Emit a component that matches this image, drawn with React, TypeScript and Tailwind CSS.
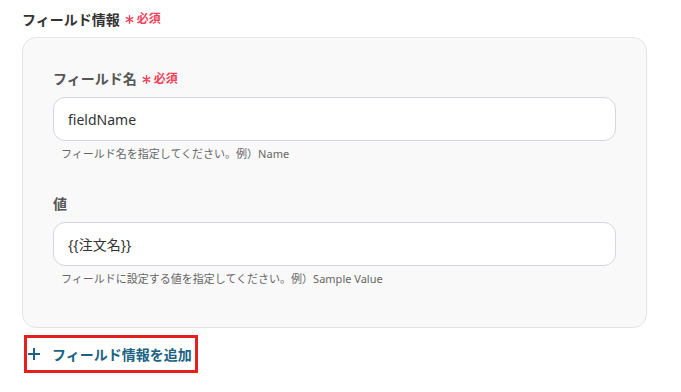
import React from 'react';

const font = { fontFamily: '"Noto Sans", "Noto Sans CJK JP", sans-serif' };

const Star: React.FC = () => (
  <svg viewBox="0 0 10 10" className="mr-[3px] h-[9px] w-[9px]" fill="none" stroke="currentColor" strokeWidth="1.6" strokeLinecap="round">
    <path d="M5 0.8v8.4M1.4 2.9l7.2 4.2M8.6 2.9l-7.2 4.2" />
  </svg>
);

const Required: React.FC = () => (
  <span className="ml-[5px] inline-flex items-center text-[12px] font-bold text-[#f0435b]">
    <Star />
    必須
  </span>
);

interface FieldProps {
  label: string;
  required?: boolean;
  value: string;
  help: string;
}

const Field: React.FC<FieldProps> = ({ label, required, value, help }) => (
  <div>
    <div className="flex h-5 items-center text-[14px] font-bold leading-5 text-[#555]">
      {label}
      {required && <Required />}
    </div>
    <div className="mt-2 flex h-[44px] items-center rounded-xl border border-[#d3d7de] bg-white px-[14px] text-[14px] text-[#333]">
      {value}
    </div>
    <p className="mt-[5px] pl-2 text-[11px] leading-4 text-[#666]">{help}</p>
  </div>
);

const App: React.FC = () => {
  return (
    <div className="min-h-screen bg-white pl-[22px] pr-[34px] pt-[8px]" style={font}>
      <div className="flex h-[22px] items-center text-[14px] font-bold text-[#333]">
        フィールド情報
        <Required />
      </div>

      <div className="mt-[7px] rounded-[14px] border border-[#e4e4e4] bg-[#f9f9f9] px-[30px] pb-[40px] pt-[31px]">
        <Field
          label="フィールド名"
          required
          value="fieldName"
          help="フィールド名を指定してください。例）Name"
        />
        <div className="mt-[32px]">
          <Field
            label="値"
            value="{{注文名}}"
            help="フィールドに設定する値を指定してください。例）Sample Value"
          />
        </div>
      </div>

      <button className="ml-[2px] mt-[7px] flex h-[38px] w-[174px] items-center border-[3px] border-[#e5201f] pl-[1px] text-[14px] font-bold text-[#1b6382]">
        <svg viewBox="0 0 12 12" className="mr-[12px] h-[12px] w-[12px]" fill="none" stroke="currentColor" strokeWidth="2">
          <path d="M6 0v12M0 6h12" />
        </svg>
        フィールド情報を追加
      </button>
    </div>
  );
};

export default App;
